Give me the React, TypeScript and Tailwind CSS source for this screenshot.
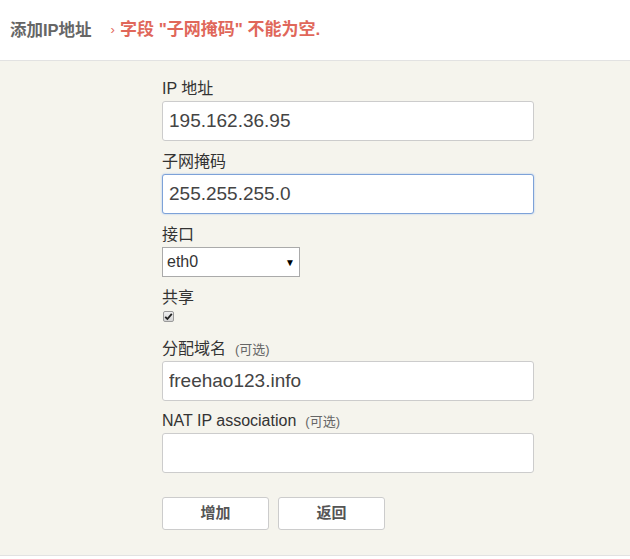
import React from "react";

const font = { fontFamily: '"Liberation Sans", "Noto Sans CJK SC", sans-serif' };

function Field({ label, optional, children, className = "" }: { label: string; optional?: boolean; children: React.ReactNode; className?: string }) {
  return (
    <div className={className}>
      <label className="block h-[20px] text-[16px] leading-[20px] text-[#333]">
        {label}
        {optional && <span className="ml-[9px] text-[13px] text-[#666]">(可选)</span>}
      </label>
      <div className="mt-[2px]">{children}</div>
    </div>
  );
}

function TextInput({ value, focused }: { value: string; focused?: boolean }) {
  return (
    <input
      readOnly
      value={value}
      className={
        focused
          ? "block h-[40px] w-[372px] rounded-[3px] border border-[#7da2d8] bg-white px-[6px] text-[19px] text-[#444] shadow-[0_0_2px_#9fbff0] outline-none"
          : "block h-[40px] w-[372px] rounded-[3px] border border-[#ccc] bg-white px-[6px] text-[19px] text-[#444] outline-none"
      }
      style={font}
    />
  );
}

export default function App() {
  return (
    <div className="min-h-[559px] bg-white" style={font}>
      {/* Header */}
      <div className="flex h-[61px] items-center border-b border-[#e2e2e2] bg-white pl-[10px]">
        <span className="text-[16.5px] font-bold text-[#666]">添加IP地址</span>
        <span className="ml-[19px] text-[13px] text-[#e36a5b]">›</span>
        <span className="ml-[5px] text-[17px] font-bold text-[#e0675a]">字段 "子网掩码" 不能为空.</span>
      </div>

      {/* Form panel */}
      <div className="border-b border-[#e2e2e2] bg-[#f5f4ed] pt-[18px] pb-[25px]">
        <div className="ml-[162px] w-[372px]">
          <Field label="IP 地址">
            <TextInput value="195.162.36.95" />
          </Field>

          <Field label="子网掩码" className="mt-[11px]">
            <TextInput value="255.255.255.0" focused />
          </Field>

          <Field label="接口" className="mt-[11px]">
            <div className="flex h-[30px] w-[138px] items-center justify-between border border-[#aaa] bg-white pl-[4px] pr-[4px]">
              <span className="text-[16px] text-[#333]">eth0</span>
              <span className="text-[10px] text-black">▼</span>
            </div>
          </Field>

          <div className="mt-[11px]">
            <div className="h-[20px] text-[16px] leading-[20px] text-[#333]">共享</div>
            <div className="ml-[1px] mt-[3px] flex h-[11px] w-[11px] items-center justify-center rounded-[2px] border border-[#9a9a9a] bg-gradient-to-b from-[#f0f0f0] to-[#d4d4d4]">
              <svg width="9" height="9" viewBox="0 0 9 9">
                <path d="M1.2 4.8 L3.4 7 L7.8 1.8" fill="none" stroke="#222" strokeWidth="1.8" />
              </svg>
            </div>
          </div>

          <Field label="分配域名" optional className="mt-[17px]">
            <TextInput value="freehao123.info" />
          </Field>

          <Field label="NAT IP association" optional className="mt-[10px]">
            <TextInput value="" />
          </Field>

          <div className="mt-[24px] flex gap-[9px]">
            <button className="h-[33px] w-[107px] rounded-[3px] border border-[#ccc] bg-white text-[15px] font-bold text-[#555]">增加</button>
            <button className="h-[33px] w-[107px] rounded-[3px] border border-[#ccc] bg-white text-[15px] font-bold text-[#555]">返回</button>
          </div>
        </div>
      </div>
    </div>
  );
}
